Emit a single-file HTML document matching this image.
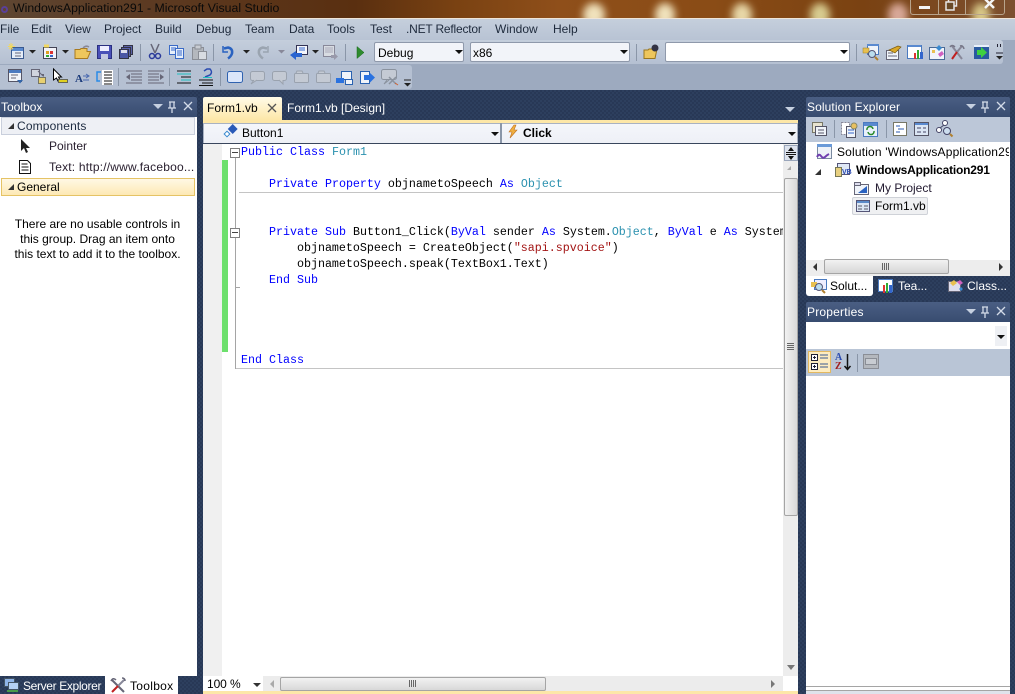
<!DOCTYPE html>
<html><head><meta charset="utf-8"><style>
html,body{margin:0;padding:0}
body{width:1015px;height:694px;overflow:hidden;position:relative;background:#2a3b59;font-family:"Liberation Sans",sans-serif;font-size:12px;color:#000}
div,span.a,svg.a{position:absolute;box-sizing:border-box}
.t{white-space:pre;line-height:14px}
.m{top:22px;color:#1e2a3c;font-size:12px}
.w{color:#fff}
.h{background:linear-gradient(#4a5e83,#384c70);border-radius:2px 2px 0 0}
.c{font-family:"Liberation Mono",monospace;font-size:11.67px;white-space:pre;left:241px;line-height:16px}
b{font-weight:normal;color:#0000ff}i{font-style:normal;color:#2b91af}u{text-decoration:none;color:#a31515}
.combo{background:#f2f4f9;border:1px solid #8f99ab;border-radius:2px}
.arr{width:0;height:0;border-left:4px solid transparent;border-right:4px solid transparent;border-top:4px solid #111}
.tri{width:0;height:0;border-left:5px solid transparent;border-right:5px solid transparent;border-top:5px solid #c6d0e0}
.blot{top:3px;height:24px;border-radius:50%;filter:blur(4px)}
</style></head><body>
<!-- title bar -->
<div style="left:0;top:0;width:1015px;height:18px;overflow:hidden;background:linear-gradient(90deg,#5e4632 0,#5c3d26 10%,#5a2f10 35%,#7a4212 45%,#8f4f1a 55%,#8a4c16 70%,#7a4212 85%,#7c5030 100%)">
<div class="blot" style="left:583px;width:22px;background:#f0e2bc"></div>
<div class="blot" style="left:655px;width:20px;background:#f0e2bc"></div>
<div class="blot" style="left:732px;width:20px;background:#e8d8a8"></div>
<div class="blot" style="left:810px;width:20px;background:#d8cc90"></div>
<div class="blot" style="left:888px;width:20px;background:#d8a898"></div>
<div class="blot" style="left:972px;width:18px;background:#d8c888"></div>
</div>
<div class="t" style="left:13px;top:1px;font-size:12.3px;color:#0a0a0a">WindowsApplication291 - Microsoft Visual Studio</div>
<div style="left:1px;top:6px;width:7px;height:7px;border:2px solid #5a3f98;border-radius:50%"></div>
<div style="left:910px;top:-6px;width:95px;height:21px;border:1px solid #b8a48c;border-radius:3px"></div>
<div style="left:938px;top:-6px;width:1px;height:21px;background:#b8a48c"></div>
<div style="left:965px;top:-6px;width:1px;height:21px;background:#b8a48c"></div>
<div style="left:919px;top:6px;width:11px;height:3px;background:#f4f4f4"></div>
<svg class="a" style="left:945px;top:0" width="13" height="11" fill="none" stroke="#e8e8e8" stroke-width="1.500"><rect x="3.500" y="-2" width="8" height="8"/><rect x="1" y="2" width="8" height="8" fill="#6a4a28"/></svg>
<svg class="a" style="left:984px;top:0" width="12" height="9" fill="none" stroke="#f4f4f4" stroke-width="2.500"><path d="M1 -1l9 9M10 -1l-9 9"/></svg>
<!-- menu / toolbars bg -->
<div style="left:0;top:18px;width:1015px;height:1px;background:#efe5d8"></div>
<div style="left:0;top:19px;width:1015px;height:21px;background:linear-gradient(#c5cfdc,#b8c3d4)"></div>
<div style="left:0;top:40px;width:1015px;height:50px;background:#9daabf"></div>
<div style="left:0;top:90px;width:1015px;height:604px;background:repeating-conic-gradient(#2d3f5e 0 25%,#283856 0 50%) 0 0/4px 4px"></div>
<div class="t m" style="left:0">File</div><div class="t m" style="left:31px">Edit</div><div class="t m" style="left:65px">View</div><div class="t m" style="left:104px">Project</div><div class="t m" style="left:155px">Build</div><div class="t m" style="left:196px">Debug</div><div class="t m" style="left:245px">Team</div><div class="t m" style="left:289px">Data</div><div class="t m" style="left:327px">Tools</div><div class="t m" style="left:370px">Test</div><div class="t m" style="left:406px;letter-spacing:-.2px">.NET Reflector</div><div class="t m" style="left:495px">Window</div><div class="t m" style="left:553px">Help</div>
<!-- toolbar 1 -->
<div style="left:0;top:40px;width:1003px;height:24px;background:linear-gradient(#c4cedc,#b5c0d2);border-radius:0 3px 3px 0"></div>
<div style="left:0;top:65px;width:412px;height:24px;background:#b5c0d2;border-radius:0 3px 3px 0"></div>
<svg class="a" style="left:0;top:40px" width="1015" height="50" viewBox="0 40 1015 50" fill="none">
<!-- tb1 icons -->
<rect x="11.500" y="47.500" width="12" height="11" fill="#e4ecf8" stroke="#3a5a90"/><rect x="12" y="48" width="11" height="3" fill="#5a8ad0"/><path d="M15 53h6M15 56h6" stroke="#667"/><path d="M11 43v7M8 46.500h7M9 44l4 5M13 44l-4 5" stroke="#f2d860"/>
<path d="M29 50h7l-3.500 3.500z" fill="#222"/>
<rect x="43.500" y="47.500" width="13" height="11" fill="#f4f4fa" stroke="#445"/><path d="M44 46h5" stroke="#f2d860" stroke-width="3"/><rect x="46" y="51" width="3" height="3" fill="#e0a020"/><rect x="50" y="51" width="3" height="3" fill="#d33"/><rect x="46" y="55" width="3" height="2" fill="#3a3"/><rect x="50" y="55" width="3" height="2" fill="#36c"/>
<path d="M62 50h7l-3.500 3.500z" fill="#222"/>
<path d="M75 58.500V49.500h5l1-1h6v3h3.500l-3 7z" fill="#eec65c" stroke="#a87a20"/><path d="M83 48q3-3 6-1" stroke="#889" stroke-width="1.500"/>
<rect x="97.500" y="45.500" width="14" height="13" fill="#4a50b8" stroke="#2a3080"/><rect x="100" y="46" width="9" height="5" fill="#eef"/><rect x="101" y="54" width="7" height="5" fill="#c4c8e0"/>
<rect x="123.500" y="45.500" width="9" height="9" fill="#5a62a8" stroke="#334"/><rect x="121.500" y="47.500" width="9" height="9" fill="#5a62a8" stroke="#334"/><rect x="119.500" y="49.500" width="9" height="9" fill="#4a55a5" stroke="#334"/><rect x="121" y="50" width="6" height="3" fill="#dde"/>
<rect x="140" y="44" width="1" height="17" fill="#8a96a8"/>
<path d="M151 44l4 9M159 44l-4 9" stroke="#667" stroke-width="1.500"/><circle cx="152" cy="56" r="2.500" stroke="#2a3a9a" stroke-width="1.500"/><circle cx="158" cy="56" r="2.500" stroke="#2a3a9a" stroke-width="1.500"/>
<rect x="169.500" y="45.500" width="8" height="9" fill="#e8f0fa" stroke="#3a6ac6"/><path d="M171 48h5M171 50h5" stroke="#36c"/><rect x="175.500" y="48.500" width="8" height="10" fill="#e8f0fa" stroke="#3a6ac6"/><path d="M177 51h5M177 53h5M177 55h5" stroke="#36c"/>
<rect x="192.500" y="47.500" width="11" height="12" fill="#b4b8be" stroke="#8a8e96"/><rect x="195" y="45" width="6" height="4" fill="#c8ccd2" stroke="#8a8e96"/><rect x="198.500" y="51.500" width="8" height="8" fill="#d8dce2" stroke="#8a8e96"/>
<rect x="213" y="44" width="1" height="17" fill="#8a96a8"/>
<path d="M224 48.500l4-1q5 1 4 6-1 3-4 5" stroke="#2a62c0" stroke-width="2.500"/><path d="M223 46v6h5" stroke="#2a62c0" stroke-width="1.500"/>
<path d="M243 50h7l-3.500 3.500z" fill="#222"/>
<path d="M267 48.500l-4-1q-5 1-4 6 1 3 4 5" stroke="#9aa4b0" stroke-width="2.500"/><path d="M268 46v6h-5" stroke="#9aa4b0" stroke-width="1.500"/>
<path d="M278 50h7l-3.500 3.500z" fill="#889"/>
<rect x="296.500" y="45.500" width="11" height="9" fill="#f4f6fc" stroke="#335"/><path d="M299 48h6M299 50h6" stroke="#36c"/><path d="M290 55l6-4v2h6v4h-6v3z" fill="#2a64d0"/>
<path d="M312 50h7l-3.500 3.500z" fill="#222"/>
<rect x="323.500" y="45.500" width="11" height="11" fill="#d8dce2" stroke="#889"/><path d="M325 48h8M325 50h8M325 52h8" stroke="#aab"/><path d="M331 55h3v-2l4 3.500-4 3.500v-2h-3z" fill="#99a"/>
<rect x="345" y="44" width="1" height="17" fill="#8a96a8"/>
<path d="M357 46.500l7 6-7 6z" fill="#2e8b2e" stroke="#1a6a1a" stroke-width=".5"/>
<rect x="636" y="44" width="1" height="17" fill="#8a96a8"/>
<path d="M644 58.500V50h4l1-1h8l-2 9.500z" fill="#eec65c" stroke="#99761f"/><circle cx="655" cy="48" r="3.500" fill="#334"/>
<rect x="856" y="44" width="1" height="17" fill="#8a96a8"/>
<rect x="867.500" y="44.500" width="11" height="10" fill="#f0f4fa" stroke="#4a7ac0"/><rect x="867" y="44" width="12" height="2" fill="#5a8ad0"/><rect x="863" y="48" width="6" height="5" fill="#e8c050" stroke="#a08020" stroke-width=".5"/><circle cx="872" cy="54" r="3.500" stroke="#557" fill="#bde"/><path d="M875 57l3 3" stroke="#b08030" stroke-width="2"/>
<rect x="886.500" y="50.500" width="12" height="9" fill="#f0f4fa" stroke="#667"/><path d="M888 53h5M888 56h9" stroke="#667"/><path d="M889 50l9-4 3 1-6 6z" fill="#d9a82a" stroke="#7a5a10" stroke-width=".7"/>
<rect x="907.500" y="45.500" width="14" height="13" fill="#fff" stroke="#4a7ac0"/><rect x="908" y="45" width="13" height="2" fill="#5a8ad0"/><rect x="914" y="53" width="2" height="6" fill="#d33"/><rect x="917" y="50" width="2" height="9" fill="#3a3"/><rect x="920" y="52" width="3" height="7" fill="#36c"/>
<rect x="929.500" y="47.500" width="15" height="12" fill="#f0f4fa" stroke="#4a6a96"/><path d="M936 48l3-3 3 3-3 3z" fill="#3a8ad0"/><path d="M938 54l4-3 2 3-4 3z" fill="#d060c0"/><path d="M932 50l3 0 0 3-3 0z" fill="#e8c050"/>
<path d="M952 46l10 13" stroke="#889" stroke-width="2"/><path d="M962 46l-5 6" stroke="#889" stroke-width="2"/><path d="M957 52l-5 7" stroke="#c02020" stroke-width="2"/><path d="M950 47q2-3 5 0M960 46q3-1 4 3" stroke="#778" stroke-width="1.500"/>
<rect x="974" y="45" width="15" height="14" fill="#2a5aa0"/><rect x="974" y="45" width="15" height="2" fill="#e8f0fa"/><path d="M977 50h4v-3l6 5.500-6 5.500v-3h-4z" fill="#3fd040"/>
<path d="M997.500 44v3M1000.500 44v3M996 53h7" stroke="#223"/><path d="M996 56h7l-3.500 3.500z" fill="#222"/>
<!-- tb2 icons -->
<rect x="8.500" y="69.500" width="13" height="12" fill="#f0f4fa" stroke="#556"/><rect x="9" y="70" width="12" height="3" fill="#4a7ac0"/><path d="M11 75h7M11 78h5" stroke="#667"/><path d="M17 80h6l-3 3.500z" fill="#36a"/>
<rect x="31.500" y="69.500" width="8" height="7" fill="#d0d4de" stroke="#667"/><rect x="38.500" y="77.500" width="7" height="6" fill="#e8d070" stroke="#776"/><path d="M38 71l5 5" stroke="#667"/><path d="M41 74l3 0 0 3z" fill="#667"/>
<path d="M53.500 69v11l3-2 2 4 2-1-2-4h3z" fill="#fff" stroke="#000"/><rect x="58.500" y="79.500" width="9" height="3" fill="#e0d020" stroke="#665"/>
<text x="75" y="82" font-family="Liberation Serif" font-size="11" font-weight="bold" fill="#1a3a7a">A</text><path d="M83 76h6M86 74l3 2-3 2M83 80h6" stroke="#4a6ab0"/>
<path d="M101 72h-4v9h3" stroke="#2a8ae8" stroke-width="1.500"/><rect x="102" y="70" width="11" height="15" fill="#fff"/><path d="M104 72h8M104 75h8M104 78h8M104 81h8M104 84h8" stroke="#111"/>
<rect x="118" y="68" width="1" height="18" fill="#8a96a8"/>
<path d="M126 71h16M131 74h11M131 77h11M131 80h11M126 83h16" stroke="#667"/><path d="M126 77l4-3v6z" fill="#667"/>
<path d="M148 71h16M148 74h11M148 77h11M148 80h11M148 83h16" stroke="#667"/><path d="M164 77l-4-3v6z" fill="#667"/>
<rect x="169" y="68" width="1" height="18" fill="#8a96a8"/>
<path d="M177 71h14M181 77h10M177 83h14" stroke="#111"/><path d="M177 74h14M181 80h10" stroke="#20c0c0"/>
<path d="M199 80h14M202 83h11M199 85.500h14" stroke="#111"/><path d="M204 71l3-2h3q3 3 0 6l-5 2" stroke="#2a4ab0" stroke-width="1.500"/><path d="M203 77.500h9" stroke="#20c0c0"/>
<rect x="220" y="68" width="1" height="18" fill="#8a96a8"/>
<rect x="227.500" y="71.500" width="15" height="11" rx="2" fill="#dbe6fa" stroke="#2f62b0"/>
<g stroke="#9aa2ae" fill="#c4cad4"><rect x="250.500" y="71.500" width="14" height="9" rx="2"/><path d="M254 80l-3 4 6-4"/><rect x="272.500" y="71.500" width="14" height="9" rx="2"/><path d="M279 80l4 4 0-4"/><rect x="294.500" y="73.500" width="14" height="9" rx="1"/><rect x="316.500" y="73.500" width="14" height="9" rx="1"/><path d="M296 73l1-2h5l1 2M318 73l1-2h5l1 2"/></g>
<rect x="341.500" y="71.500" width="10" height="8" fill="#f0f4fa" stroke="#2a62b0"/><path d="M336 78h8v5h-8z" fill="#2a72e0"/><rect x="345.500" y="79.500" width="7" height="5" fill="#f0f4fa" stroke="#2a62b0"/>
<rect x="360.500" y="71.500" width="9" height="12" fill="#f0f4fa" stroke="#2a62b0"/><path d="M364 75h6v-2l5 4.500-5 5v-2.500h-6z" fill="#2a72e0"/>
<rect x="381.500" y="69.500" width="15" height="10" rx="2" fill="#c4cad4" stroke="#8a929e"/><path d="M387 80l-3 4 5-4" fill="#c4cad4" stroke="#8a929e"/><path d="M389 77l7 7M396 77l-7 7" stroke="#8a929e" stroke-width="1.500"/><path d="M395 83l3 2" stroke="#d06030"/>
<path d="M404 80h7" stroke="#222"/><path d="M404 83h7l-3.500 3.500z" fill="#222"/>
</svg>
<!-- combos -->
<div class="combo" style="left:374px;top:42px;width:90px;height:20px"></div><div class="t" style="left:378px;top:46px">Debug</div><div class="arr" style="left:455px;top:50px"></div>
<div class="combo" style="left:470px;top:42px;width:160px;height:20px"></div><div class="t" style="left:473px;top:46px">x86</div><div class="arr" style="left:620px;top:50px"></div>
<div class="combo" style="left:665px;top:42px;width:185px;height:20px;background:#fff"></div><div class="arr" style="left:840px;top:50px"></div>
<!-- Toolbox -->
<div class="h" style="left:0;top:97px;width:197px;height:20px"></div>
<div class="t w" style="left:1px;top:100px">Toolbox</div>
<div class="tri" style="left:153px;top:104px"></div>
<svg class="a" style="left:167px;top:100px" width="26" height="14" fill="none" stroke="#d3dbe8" stroke-width="1.300"><path d="M2 2h6M3 2v6h4V2M1 8h8M5 8v5"/><path d="M17 2l8 8M25 2l-8 8"/></svg>
<div style="left:0;top:117px;width:197px;height:559px;background:#fff"></div>
<div style="left:1px;top:117px;width:194px;height:18px;background:#eef0f5;border:1px solid #c9cfdc"></div>
<div style="left:8px;top:123px;width:0;height:0;border-left:6px solid transparent;border-bottom:6px solid #333"></div>
<div class="t" style="left:17px;top:119px;color:#1d2b40;letter-spacing:.15px">Components</div>
<svg class="a" style="left:18px;top:137px" width="16" height="38"><path d="M3 2v12l3-3 2 5 2-1-2-4h4z" fill="#222"/><path d="M1.500 23.500h8l3 3v10h-11z" fill="#fff" stroke="#111"/><path d="M3.500 27h6M3.500 30h7M3.500 33h7" stroke="#111"/></svg>
<div class="t" style="left:49px;top:139px;color:#2a2030">Pointer</div>
<div class="t" style="left:49px;top:160px;color:#2a2030;letter-spacing:.2px">Text: http://www.faceboo...</div>
<div style="left:1px;top:178px;width:194px;height:18px;background:linear-gradient(#fff8e4,#fde9b4);border:1px solid #e5c365"></div>
<div style="left:8px;top:184px;width:0;height:0;border-left:6px solid transparent;border-bottom:6px solid #333"></div>
<div class="t" style="left:17px;top:180px">General</div>
<div class="t" style="left:0;top:217px;width:195px;text-align:center;line-height:15px">There are no usable controls in
this group. Drag an item onto
this text to add it to the toolbox.</div>
<!-- bottom-left tabs -->
<svg class="a" style="left:3px;top:677px" width="16" height="16"><rect x="1.500" y="1.500" width="10" height="8" fill="#8fb4e8" stroke="#456"/><rect x="5.500" y="5.500" width="10" height="7" fill="#b4d0f4" stroke="#456"/><path d="M4 14h11" stroke="#4a9a4a" stroke-width="2"/></svg>
<div class="t w" style="left:23px;top:679px;letter-spacing:-.35px">Server Explorer</div>
<div style="left:105px;top:676px;width:73px;height:18px;background:#fff"></div>
<svg class="a" style="left:110px;top:677px" width="16" height="16" fill="none" stroke-width="2"><path d="M2 3l12 12" stroke="#667"/><path d="M14 3L8 9" stroke="#889"/><path d="M8 9l-6 6" stroke="#c02020"/><path d="M1 4q2-4 5-1M12 1q3 0 3 3" stroke="#667" stroke-width="1.500"/></svg>
<div class="t" style="left:130px;top:679px;letter-spacing:.3px">Toolbox</div>
<!-- Editor -->
<div style="left:203px;top:97px;width:79px;height:23px;background:linear-gradient(#fffbe8,#fde7a8);border-radius:2px 2px 0 0"></div>
<div class="t" style="left:207px;top:101px">Form1.vb</div>
<svg class="a" style="left:267px;top:103px" width="10" height="10" fill="none" stroke="#555" stroke-width="1.300"><path d="M1 1l8 8M9 1l-8 8"/></svg>
<div class="t w" style="left:287px;top:101px">Form1.vb [Design]</div>
<div class="tri" style="left:785px;top:107px"></div>
<div style="left:203px;top:120px;width:595px;height:3px;background:#fde7a8"></div>
<div style="left:203px;top:123px;width:595px;height:20px;background:linear-gradient(#f4f6fb,#eef0f6);border:1px solid #a9b2c2;border-bottom:0"></div>
<div style="left:500px;top:123px;width:2px;height:20px;background:#8a96a8"></div>
<svg class="a" style="left:223px;top:124px" width="18" height="16"><rect x="6" y="1" width="7" height="7" fill="#2a5ab8" transform="rotate(45 9 5)"/><rect x="2" y="8" width="4" height="4" fill="#fff" stroke="#3a8ad0" transform="rotate(45 4 10)"/></svg>
<div class="t" style="left:242px;top:126px">Button1</div>
<div class="arr" style="left:491px;top:132px"></div>
<svg class="a" style="left:507px;top:124px" width="12" height="16"><path d="M7 1L2 8h3l-2 6 7-8H7l2-5z" fill="#f0b040" stroke="#c07020" stroke-width=".6"/></svg>
<div class="t" style="left:523px;top:126px;font-weight:bold">Click</div>
<div class="arr" style="left:788px;top:132px"></div>
<div style="left:203px;top:143px;width:595px;height:534px;background:#fff"></div>
<div style="left:203px;top:143px;width:595px;height:1px;background:#39465c"></div>
<div style="left:203px;top:144px;width:19px;height:533px;background:#f0f0f0"></div>
<div style="left:222px;top:160px;width:6px;height:192px;background:#6de06d"></div>
<div style="left:235px;top:153px;width:1px;height:216px;background:#a5a5a5"></div>
<div style="left:230px;top:148px;width:10px;height:10px;background:#fff;border:1px solid #808080"></div><div style="left:232px;top:152px;width:6px;height:1px;background:#444"></div>
<div style="left:230px;top:228px;width:10px;height:10px;background:#fff;border:1px solid #808080"></div><div style="left:232px;top:232px;width:6px;height:1px;background:#444"></div>
<div style="left:236px;top:287px;width:4px;height:1px;background:#a5a5a5"></div>
<div style="left:239px;top:192px;width:544px;height:1px;background:#c4c4c4"></div>
<div style="left:236px;top:368px;width:547px;height:1px;background:#c4c4c4"></div>
<div class="c" style="top:144px"><b>Public</b> <b>Class</b> <i>Form1</i></div>
<div class="c" style="top:176px">    <b>Private</b> <b>Property</b> objnametoSpeech <b>As</b> <i>Object</i></div>
<div class="c" style="top:224px;width:542px;overflow:hidden">    <b>Private</b> <b>Sub</b> Button1_Click(<b>ByVal</b> sender <b>As</b> System.<i>Object</i>, <b>ByVal</b> e <b>As</b> System.EventArgs)</div>
<div class="c" style="top:240px">        objnametoSpeech = CreateObject(<u>"sapi.spvoice"</u>)</div>
<div class="c" style="top:256px">        objnametoSpeech.speak(TextBox1.Text)</div>
<div class="c" style="top:272px">    <b>End</b> <b>Sub</b></div>
<div class="c" style="top:352px"><b>End</b> <b>Class</b></div>
<!-- editor v scrollbar -->
<div style="left:783px;top:144px;width:15px;height:533px;background:#ededed"></div>
<div style="left:784px;top:145px;width:14px;height:16px;background:#dde3ee;border:1px solid #9aa6bb"></div>
<svg class="a" style="left:786px;top:146px" width="10" height="14"><path d="M0 6.500h10M0 8.500h10" stroke="#111"/><path d="M5 1l3 4h-6zM5 14l3-4h-6z" fill="#111"/></svg>
<div style="left:787px;top:166px;width:0;height:0;border-left:4px solid transparent;border-bottom:4px solid #aaa"></div>
<div style="left:784px;top:178px;width:14px;height:338px;background:linear-gradient(90deg,#f2f2f2,#d8d8d8);border:1px solid #a5a5a5;border-radius:2px"></div>
<div style="left:787px;top:343px;width:7px;height:7px;background:repeating-linear-gradient(#666 0 1px,transparent 1px 2px)"></div>
<div style="left:787px;top:665px;width:0;height:0;border-left:4px solid transparent;border-right:4px solid transparent;border-top:5px solid #777"></div>
<!-- editor bottom -->
<div style="left:203px;top:676px;width:595px;height:15px;background:#ececec"></div>
<div style="left:203px;top:676px;width:60px;height:15px;background:#fff"></div>
<div class="t" style="left:207px;top:677px;letter-spacing:-.1px">100 %</div>
<div class="arr" style="left:253px;top:683px;border-top-color:#333"></div>
<div style="left:270px;top:680px;width:0;height:0;border-top:4px solid transparent;border-bottom:4px solid transparent;border-right:4px solid #aaa"></div>
<div style="left:280px;top:677px;width:266px;height:14px;background:linear-gradient(#f2f2f2,#d8d8d8);border:1px solid #a5a5a5;border-radius:2px"></div>
<div style="left:409px;top:680px;width:7px;height:7px;background:repeating-linear-gradient(90deg,#666 0 1px,transparent 1px 2px)"></div>
<div style="left:771px;top:680px;width:0;height:0;border-top:4px solid transparent;border-bottom:4px solid transparent;border-left:4px solid #777"></div>
<div style="left:783px;top:676px;width:15px;height:15px;background:#fff"></div>
<div style="left:203px;top:691px;width:595px;height:3px;background:#fde7a8"></div>
<!-- Solution Explorer -->
<div class="h" style="left:806px;top:97px;width:204px;height:20px"></div>
<div class="t w" style="left:807px;top:100px;letter-spacing:.1px">Solution Explorer</div>
<div class="tri" style="left:966px;top:104px"></div>
<svg class="a" style="left:980px;top:100px" width="26" height="14" fill="none" stroke="#d3dbe8" stroke-width="1.300"><path d="M2 2h6M3 2v6h4V2M1 8h8M5 8v5"/><path d="M17 2l8 8M25 2l-8 8"/></svg>
<div style="left:806px;top:117px;width:204px;height:25px;background:#bcc7d8"></div>
<svg class="a" style="left:806px;top:117px" width="204" height="25" fill="none">
<rect x="6.500" y="5.500" width="10" height="10" fill="#e8e4d0" stroke="#776"/><rect x="9.500" y="9.500" width="11" height="9" fill="#f0f4fa" stroke="#556"/><path d="M12 13h6M12 16h6" stroke="#556"/>
<rect x="28" y="3" width="1" height="18" fill="#8a96a8"/>
<rect x="35.500" y="5.500" width="8" height="12" fill="#fff" stroke="#889" stroke-dasharray="2 1"/><rect x="40.500" y="9.500" width="9" height="11" fill="#f0f4fa" stroke="#556"/><path d="M42 13h6M42 16h6" stroke="#36c"/><circle cx="48" cy="9" r="3" fill="#e8c060" stroke="#886"/>
<rect x="57.500" y="5.500" width="14" height="14" fill="#e8f0fa" stroke="#4a7ac0"/><rect x="58" y="6" width="13" height="3" fill="#5a8ad0"/><path d="M61 13a3 3 0 0 1 6-1M68 14a3 3 0 0 1-6 1" stroke="#2a8a2a" stroke-width="1.500"/>
<rect x="80" y="3" width="1" height="18" fill="#8a96a8"/>
<rect x="87.500" y="5.500" width="13" height="13" fill="#fff" stroke="#776"/><path d="M90 9h4M92 12h6M90 15h4" stroke="#2a5ab0"/>
<rect x="108.500" y="5.500" width="14" height="13" fill="#dbe6f4" stroke="#556"/><rect x="109" y="6" width="13" height="2" fill="#5a8ad0"/><path d="M111 11h4M117 11h3M111 15h4M117 15h3" stroke="#446"/>
<circle cx="139" cy="6" r="2.500" fill="#fff" stroke="#446"/><circle cx="133" cy="13" r="2.500" fill="#fff" stroke="#446"/><path d="M138 8l-4 3" stroke="#446"/><circle cx="141" cy="14" r="3.500" fill="#cde" stroke="#446"/><path d="M144 17l2.500 2.500" stroke="#b08030" stroke-width="2"/>
</svg>
<div style="left:806px;top:142px;width:204px;height:118px;background:#fff"></div>
<svg class="a" style="left:815px;top:143px" width="22" height="18"><rect x="2.500" y="1.500" width="14" height="14" fill="#eef2f8" stroke="#7a8aa0"/><rect x="2" y="1" width="15" height="3" fill="#6a9ad8"/><path d="M2 14q2-4 4-1t4 1 4-3" fill="none" stroke="#7040b0" stroke-width="2"/></svg>
<div class="t" style="left:837px;top:145px;width:172px;overflow:hidden;letter-spacing:.17px">Solution 'WindowsApplication291</div>
<div style="left:815px;top:169px;width:0;height:0;border-left:6px solid transparent;border-bottom:6px solid #333"></div>
<svg class="a" style="left:834px;top:162px" width="18" height="16"><rect x="3.500" y="1.500" width="12" height="11" fill="#dfe8f6" stroke="#557"/><rect x="1.500" y="5.500" width="6" height="9" fill="#e8d080" stroke="#775"/><text x="8" y="12" font-size="7" font-weight="bold" fill="#2a4ab0" font-family="Liberation Sans">VB</text></svg>
<div class="t" style="left:856px;top:163px;font-weight:bold;letter-spacing:-.2px">WindowsApplication291</div>
<svg class="a" style="left:853px;top:181px" width="16" height="14"><rect x="1.500" y="3.500" width="14" height="10" fill="#f0f4fa" stroke="#667"/><rect x="1.500" y="1.500" width="6" height="3" fill="#dde" stroke="#667"/><path d="M5 12l9-7v7z" fill="#2a62c0"/></svg>
<div class="t" style="left:875px;top:181px;color:#221a30">My Project</div>
<div style="left:852px;top:197px;width:76px;height:18px;background:#eff0f2;border:1px solid #cfd2d8;border-radius:2px"></div>
<svg class="a" style="left:855px;top:199px" width="16" height="14"><rect x="1.500" y="1.500" width="13" height="11" fill="#dbe6f4" stroke="#557"/><rect x="2" y="2" width="12" height="2" fill="#5a8ac8"/><path d="M3 7h4M9 7h4M3 10h4M9 10h4" stroke="#556"/></svg>
<div class="t" style="left:875px;top:199px">Form1.vb</div>
<!-- se hscroll -->
<div style="left:806px;top:260px;width:204px;height:16px;background:#ededed"></div>
<div style="left:813px;top:263px;width:0;height:0;border-top:4px solid transparent;border-bottom:4px solid transparent;border-right:4px solid #333"></div>
<div style="left:824px;top:259px;width:125px;height:15px;background:linear-gradient(#f2f2f2,#d6d6d6);border:1px solid #a5a5a5;border-radius:2px"></div>
<div style="left:882px;top:263px;width:7px;height:7px;background:repeating-linear-gradient(90deg,#666 0 1px,transparent 1px 2px)"></div>
<div style="left:999px;top:263px;width:0;height:0;border-top:4px solid transparent;border-bottom:4px solid transparent;border-left:4px solid #333"></div>
<!-- se tabs -->
<div style="left:806px;top:276px;width:67px;height:20px;background:#fff;border-radius:0 0 3px 3px"></div>
<svg class="a" style="left:810px;top:278px" width="18" height="16"><rect x="4.500" y="1.500" width="12" height="10" fill="#eef" stroke="#4a7ac0"/><rect x="1" y="4" width="6" height="5" fill="#e8c050"/><circle cx="9" cy="9" r="3.500" fill="#bde" stroke="#557"/><path d="M12 12l3 3" stroke="#b08030" stroke-width="2"/></svg>
<div class="t" style="left:830px;top:279px">Solut...</div>
<svg class="a" style="left:877px;top:278px" width="18" height="16"><rect x="1.500" y="1.500" width="14" height="12" fill="#fff" stroke="#4a7ac0"/><rect x="6" y="7" width="2" height="8" fill="#d33"/><rect x="9" y="5" width="2" height="10" fill="#3a3"/><rect x="12" y="7" width="3" height="8" fill="#36c"/></svg>
<div class="t w" style="left:898px;top:279px">Tea...</div>
<svg class="a" style="left:947px;top:278px" width="18" height="16"><rect x="1.500" y="3.500" width="12" height="10" fill="#dde" stroke="#667"/><path d="M3 5l4-3 3 3-4 3z" fill="#e8c050"/><path d="M10 4l3-2 3 3-3 2z" fill="#d060c0"/><path d="M12 11l2-2 2 2-2 2z" fill="#3a8ad0"/></svg>
<div class="t w" style="left:967px;top:279px">Class...</div>
<!-- Properties -->
<div class="h" style="left:806px;top:302px;width:204px;height:20px"></div>
<div class="t w" style="left:807px;top:305px;letter-spacing:.2px">Properties</div>
<div class="tri" style="left:966px;top:309px"></div>
<svg class="a" style="left:980px;top:305px" width="26" height="14" fill="none" stroke="#d3dbe8" stroke-width="1.300"><path d="M2 2h6M3 2v6h4V2M1 8h8M5 8v5"/><path d="M17 2l8 8M25 2l-8 8"/></svg>
<div style="left:806px;top:322px;width:204px;height:27px;background:#fff"></div>
<div style="left:995px;top:326px;width:12px;height:20px;background:#eef0f4"></div>
<div class="arr" style="left:997px;top:335px"></div>
<div style="left:806px;top:349px;width:204px;height:27px;background:#b9c5d6"></div>
<div style="left:808px;top:351px;width:23px;height:22px;background:#fdecc0;border:1px solid #e3b860"></div>
<svg class="a" style="left:810px;top:353px" width="60" height="20" fill="none"><rect x="1.500" y="1.500" width="6" height="6" fill="#fff" stroke="#223"/><rect x="1.500" y="10.500" width="6" height="6" fill="#fff" stroke="#223"/><path d="M3 4.500h3M4.500 3v3M3 13.500h3M4.500 12v3" stroke="#223"/><path d="M10 2h8M10 5h8M10 11h8M10 14h8" stroke="#3a5a90"/><path d="M37.500 1v15M34.500 13l3 3.500 3-3.500" stroke="#111" stroke-width="1.500"/><rect x="47" y="1" width="1" height="18" fill="#8a96a8"/></svg>
<div class="t" style="left:835px;top:353px;font-size:10px;font-weight:bold;color:#2a4ab0;line-height:9px;font-family:'Liberation Serif',serif">A<br><span style="color:#a02020">Z</span></div>
<div style="left:863px;top:354px;width:16px;height:15px;background:#b4b8be;border:1px solid #8a8e96"></div>
<div style="left:865px;top:358px;width:12px;height:7px;background:#c8ccd2;border:1px solid #8a8e96"></div>
<div style="left:806px;top:376px;width:204px;height:310px;background:#fff"></div>
<div style="left:806px;top:686px;width:204px;height:1px;background:#a5a5a5"></div>
<div style="left:806px;top:687px;width:204px;height:3px;background:#fff"></div>
<div style="left:806px;top:690px;width:204px;height:1px;background:#a5a5a5"></div>
<div style="left:806px;top:691px;width:204px;height:3px;background:#dfe3ec"></div>
</body></html>
